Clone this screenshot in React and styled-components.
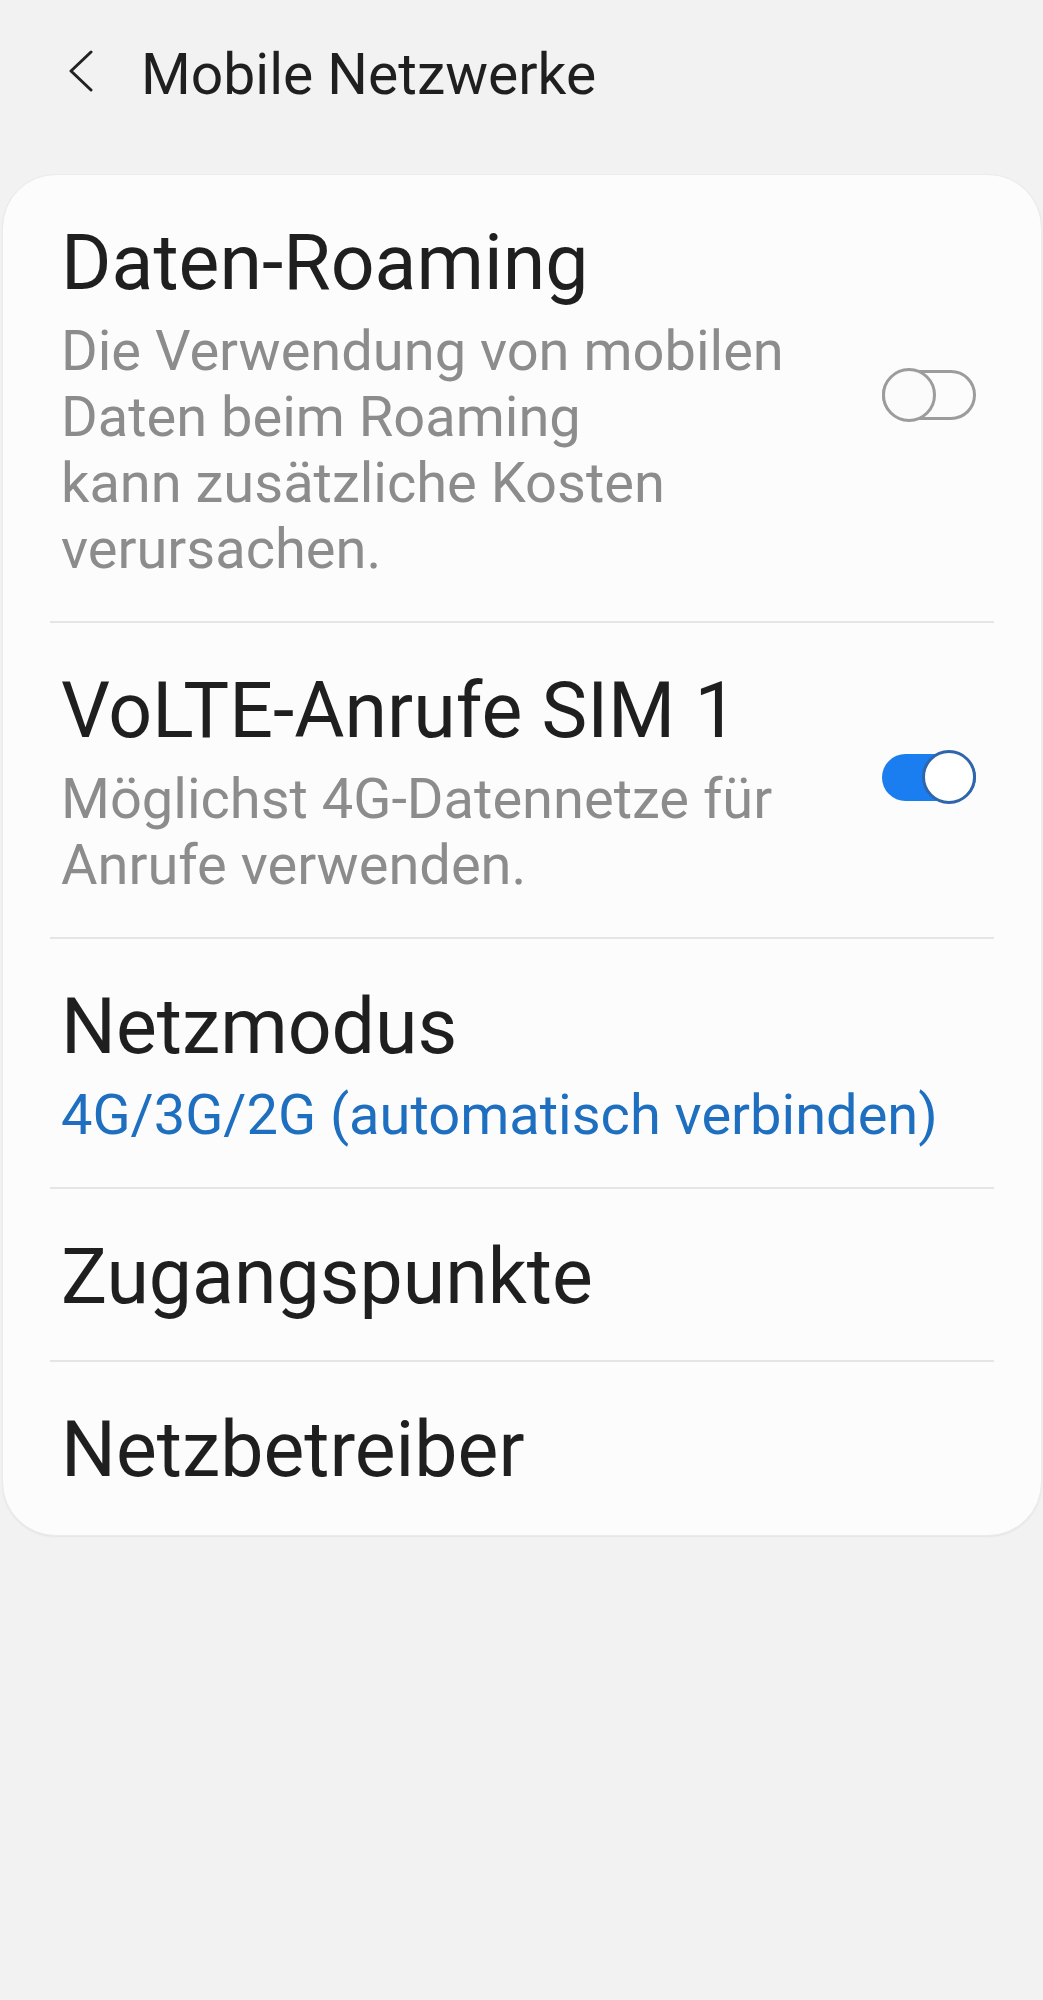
import React from 'react';
import styled, { createGlobalStyle } from 'styled-components';

const GlobalStyle = createGlobalStyle`
  html, body {
    margin: 0;
    padding: 0;
    background: #f2f2f2;
    font-family: Roboto, "Noto Sans", "Liberation Sans", sans-serif;
  }
`;

const Page = styled.div`
  min-height: 2000px;
  background: #f2f2f2;
  padding: 0 1px 0 2px;
  box-sizing: border-box;
`;

const Header = styled.header`
  display: flex;
  align-items: flex-start;
  padding: 42px 0 0 66px;
  gap: 47px;
`;

const BackIcon = styled.svg`
  flex: none;
  margin-top: 8px;
  display: block;
`;

const HeaderTitle = styled.h1`
  margin: 0;
  font-size: 57px;
  line-height: 66px;
  font-weight: 400;
  color: #1f1f1f;
`;

const Card = styled.section`
  margin-top: 66px;
  background: #fcfcfc;
  border: 1px solid #ebebeb;
  border-radius: 54px;
  box-shadow: 0 1px 2px rgba(0, 0, 0, 0.06);
`;

const Row = styled.div`
  display: flex;
  align-items: center;
  padding: 45px 65px ${(p) => (p.$last ? '41px' : '39px')} 58px;
`;

const RowText = styled.div`
  flex: 1;
  min-width: 0;
`;

const Title = styled.div`
  font-size: 77px;
  line-height: 87px;
  color: #1f1f1f;
  white-space: nowrap;
`;

const Summary = styled.div`
  margin-top: 11px;
  font-size: 56px;
  line-height: 66px;
  color: ${(p) => (p.$accent ? '#1e6fc0' : '#8c8c8c')};
  white-space: nowrap;
`;

const Divider = styled.div`
  height: 2px;
  margin: 0 47px;
  background: #e5e5e5;
`;

const Switch = styled.div`
  flex: none;
  position: relative;
  width: 94px;
  height: 54px;
  margin-bottom: 12px;
  display: flex;
  align-items: center;
`;

const Track = styled.div`
  width: 100%;
  box-sizing: border-box;
  height: ${(p) => (p.$on ? '47px' : '50px')};
  border-radius: 25px;
  background: ${(p) => (p.$on ? '#1a7ef0' : 'transparent')};
  border: ${(p) => (p.$on ? 'none' : '3px solid #9c9c9c')};
`;

const Thumb = styled.div`
  position: absolute;
  top: 0;
  ${(p) => (p.$on ? 'right: 0;' : 'left: 0;')}
  width: 54px;
  height: 54px;
  box-sizing: border-box;
  border-radius: 50%;
  background: ${(p) => (p.$on ? '#ffffff' : '#fbfbfb')};
  border: 3px solid ${(p) => (p.$on ? '#2f66ab' : '#9c9c9c')};
`;

function Toggle({ on }) {
  return (
    <Switch>
      <Track $on={on} />
      <Thumb $on={on} />
    </Switch>
  );
}

const ITEMS = [
  {
    title: 'Daten-Roaming',
    lines: [
      'Die Verwendung von mobilen',
      'Daten beim Roaming',
      'kann zusätzliche Kosten',
      'verursachen.',
    ],
    toggle: false,
  },
  {
    title: 'VoLTE-Anrufe SIM 1',
    lines: ['Möglichst 4G-Datennetze für', 'Anrufe verwenden.'],
    toggle: true,
  },
  {
    title: 'Netzmodus',
    lines: ['4G/3G/2G (automatisch verbinden)'],
    accent: true,
  },
  { title: 'Zugangspunkte' },
  { title: 'Netzbetreiber' },
];

export default function App() {
  return (
    <Page>
      <GlobalStyle />
      <Header>
        <BackIcon width="26" height="42" viewBox="0 0 26 42">
          <path
            d="M23 2 L3 21 L23 40"
            fill="none"
            stroke="#222"
            strokeWidth="3"
            strokeLinecap="round"
            strokeLinejoin="round"
          />
        </BackIcon>
        <HeaderTitle>Mobile Netzwerke</HeaderTitle>
      </Header>

      <Card>
        {ITEMS.map((item, i) => (
          <React.Fragment key={item.title}>
            {i > 0 && <Divider />}
            <Row $last={i === ITEMS.length - 1}>
              <RowText>
                <Title>{item.title}</Title>
                {item.lines && (
                  <Summary $accent={item.accent}>
                    {item.lines.map((line, j) => (
                      <React.Fragment key={j}>
                        {j > 0 && <br />}
                        {line}
                      </React.Fragment>
                    ))}
                  </Summary>
                )}
              </RowText>
              {item.toggle !== undefined && <Toggle on={item.toggle} />}
            </Row>
          </React.Fragment>
        ))}
      </Card>
    </Page>
  );
}
